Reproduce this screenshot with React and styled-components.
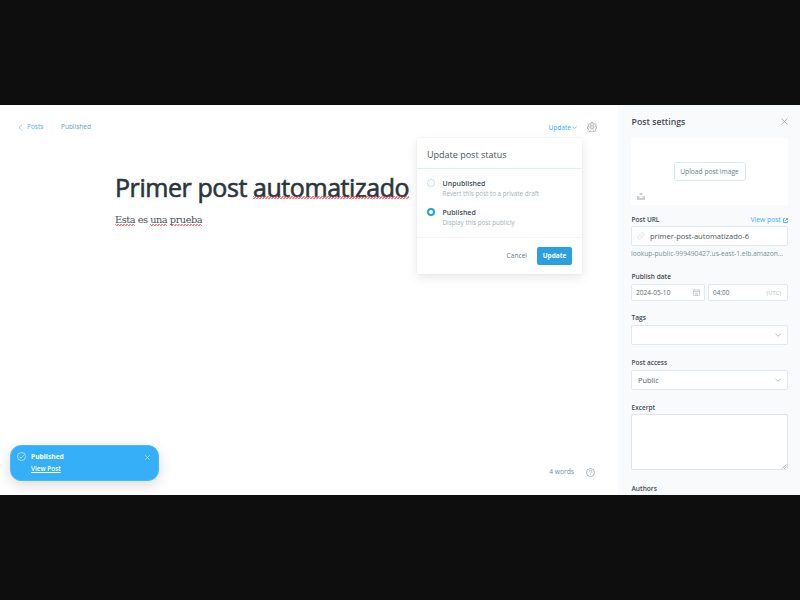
import React from "react";
import styled, { createGlobalStyle, css } from "styled-components";

const GlobalStyle = createGlobalStyle`
  * { box-sizing: border-box; }
  body { margin: 0; background: #0e0e0e; font-family: "Open Sans", "Noto Sans", sans-serif; color: #394047; }
`;

const Screen = styled.div`
  width: 800px;
  height: 600px;
  padding: 105px 0;
  background: #0e0e0e;
  overflow: hidden;
`;

const Stage = styled.div`
  display: flex;
  height: 390px;
  overflow: hidden;
  background: #fff;
`;

const Label = styled.span`
  display: block;
  white-space: nowrap;
  font-size: ${(p) => p.$size || 7}px;
  font-weight: ${(p) => p.$weight || 400};
  color: ${(p) => p.$color || "#434b52"};
  line-height: ${(p) => p.$line || 10}px;
`;

const Main = styled.main`
  position: relative;
  display: flex;
  flex-direction: column;
  width: 618px;
  height: 390px;
`;

const TopBar = styled.header`
  display: flex;
  align-items: center;
  justify-content: space-between;
  height: 20px;
  margin-top: 12px;
  padding: 0 21px 0 18px;
`;

const Crumbs = styled.nav`
  display: flex;
  align-items: center;
`;

const BackLink = styled.a`
  display: flex;
  align-items: center;
  gap: 4px;
  width: 34px;
  height: 19px;
  border-right: 1px solid #f8fafb;
  margin-right: 9px;
`;

const Actions = styled.div`
  display: flex;
  align-items: center;
  gap: 10px;
`;

const UpdateLink = styled.a`
  display: flex;
  align-items: center;
  gap: 1px;
  padding-top: 1px;
`;

const Canvas = styled.article`
  padding: 34px 0 0 115px;
`;

const Title = styled.h1`
  margin: 0;
  height: 32px;
  font-size: 25px;
  line-height: 32px;
  font-weight: 400;
  letter-spacing: -0.43px;
  -webkit-text-stroke: 0.6px #2b363c;
  white-space: nowrap;
  color: #2b363c;
`;

const Body = styled.p`
  margin: 9px 0 0;
  font-family: "DejaVu Serif", serif;
  font-size: 9.8px;
  letter-spacing: -0.48px;
  line-height: 16px;
  color: #4a555b;
`;

const Misspelled = styled.span`
  position: relative;
  display: inline-block;
  line-height: inherit;
  &::after {
    content: "";
    position: absolute;
    left: 0;
    right: 0;
    top: ${(p) => p.$top}px;
    height: ${(p) => p.$depth || 2}px;
    background:
      repeating-linear-gradient(135deg, rgba(244, 50, 60, 0.62) 0 1px, transparent 1px 2.12px);
  }
`;

const WordCount = styled.footer`
  display: flex;
  align-items: center;
  justify-content: flex-end;
  gap: 12px;
  height: 12px;
  margin: auto 23px 17px 0;
`;

const Popup = styled.section`
  position: absolute;
  left: 417px;
  top: 33px;
  width: 165px;
  height: 136px;
  border-radius: 2px;
  background: #fff;
  box-shadow: 0 0 2px rgba(0, 0, 0, 0.08), 0 4px 12px rgba(0, 0, 0, 0.09);
`;

const PopupHead = styled.div`
  display: flex;
  align-items: center;
  height: 31px;
  padding: 4px 10px 0;
  border-bottom: 1px solid #dfeef4;
`;

const PopupBody = styled.div`
  display: flex;
  flex-direction: column;
  gap: 9px;
  height: 69px;
  padding: 10px 10px 0;
  border-bottom: 1px solid #f3f5f6;
`;

const Option = styled.div`
  display: flex;
  gap: 7.5px;
  height: 20px;
`;

const Radio = styled.i`
  width: 8px;
  height: 8px;
  border-radius: 50%;
  background: #fff;
  border: 1px solid #c9e0ec;
  ${(p) =>
    p.$on &&
    css`
      border: 2.4px solid #2a9fe2;
    `}
`;

const PopupFoot = styled.div`
  display: flex;
  align-items: center;
  justify-content: flex-end;
  gap: 10px;
  height: 35px;
  padding-right: 10px;
`;

const PrimaryButton = styled.button`
  width: 35px;
  height: 18px;
  padding: 0;
  border: 0;
  border-radius: 2px;
  background: #2b9fe0;
  font-family: inherit;
  text-align: center;
`;

const Toast = styled.aside`
  position: absolute;
  left: 10px;
  top: 340px;
  display: flex;
  width: 149px;
  height: 36px;
  padding: 6px 8px 0 6px;
  border-radius: 11px;
  border: 1px solid #48bafa;
  background: #35b0f8;
  box-shadow: 0 4px 14px rgba(0, 0, 0, 0.15);
`;

const ToastText = styled.div`
  flex: 1;
  margin: 0 0 0 5px;
`;

const ToastClose = styled.div`
  padding-top: 2px;
  line-height: 0;
`;

const ToastLink = styled(Label)`
  margin-top: 2px;
  text-decoration: underline;
  text-underline-offset: 1px;
  text-decoration-thickness: 1px;
`;

const Sidebar = styled.aside`
  width: 182px;
  height: 390px;
  padding: 0 12px 0 13px;
  background: #f8fafc;
`;

const SideHead = styled.div`
  display: flex;
  align-items: center;
  justify-content: space-between;
  height: 33px;
  padding-left: 0.6px;
`;

const Uploader = styled.div`
  position: relative;
  display: flex;
  align-items: center;
  justify-content: center;
  height: 67px;
  border-radius: 1px;
  background: #fff;
`;

const UploadButton = styled.button`
  width: 72px;
  height: 19px;
  padding: 1px 0 0;
  border: 1px solid #dbe8ec;
  border-radius: 3px;
  background: #fff;
  font-family: inherit;
`;

const Unsplash = styled.svg`
  position: absolute;
  left: 6px;
  bottom: 5px;
`;

const Field = styled.div`
  margin-top: ${(p) => p.$gap}px;
`;

const FieldHead = styled.div`
  display: flex;
  align-items: center;
  justify-content: space-between;
  height: 10px;
  margin-bottom: ${(p) => p.$below || 1}px;
  padding-left: 0.5px;
`;

const ViewLink = styled.a`
  display: flex;
  align-items: center;
  gap: 2px;
`;

const Input = styled.div`
  display: flex;
  align-items: center;
  justify-content: space-between;
  width: ${(p) => (p.$width ? p.$width + "px" : "auto")};
  height: ${(p) => p.$height || 20}px;
  padding: 0 ${(p) => p.$right || 6}px 0 ${(p) => p.$left || 6}px;
  border: 1px solid #dfe9ef;
  border-radius: 2px;
  background: #fff;
`;

const UrlValue = styled.div`
  display: flex;
  align-items: center;
  gap: 5px;
`;

const DateRow = styled.div`
  display: flex;
  gap: 3px;
`;

const TextArea = styled.div`
  display: flex;
  align-items: flex-end;
  justify-content: flex-end;
  height: 56px;
  border: 1px solid #dde6ea;
  border-radius: 2px;
  background: #fff;
`;

const Chevron = ({ color, size = 6 }) => (
  <svg width={size} height={size} viewBox="0 0 6 6" fill="none" stroke={color} strokeWidth="0.7">
    <path d="M0.5 1.7 3 4.3 5.5 1.7" />
  </svg>
);

const Cross = ({ color, size, width = 0.8 }) => (
  <svg width={size} height={size} viewBox="0 0 7 7" fill="none" stroke={color} strokeWidth={width}>
    <path d="M0.5 0.5 6.5 6.5M6.5 0.5 0.5 6.5" />
  </svg>
);

const gearOutline =
  "M10.200 1.500h3.600l.8 3 2 .9 2.800-1.500 2.500 2.700-1.500 2.700.8 2 2.500.7v3l-2.700.8-.8 2 1.400 2.600-2.500 2.500-2.600-1.400-2 .8-.8 2.700h-3.400l-.8-2.700-2-.8-2.600 1.400-2.500-2.500 1.400-2.600-.8-2-2.700-.8v-3l2.700-.8.8-2-1.400-2.600 2.500-2.500 2.600 1.400 2-.9z";

const Gear = () => (
  <svg width="10" height="10" viewBox="0 0 24 24" fill="none" stroke="#7b8b93" strokeWidth="1.5">
    <circle cx="12" cy="12" r="4.600" />
    <circle cx="12" cy="12" r="1" strokeWidth="0.8" />
    <path d={gearOutline} />
  </svg>
);

export default function App() {
  return (
    <>
      <GlobalStyle />
      <Screen>
        <Stage>
          <Main>
            <TopBar>
              <Crumbs>
                <BackLink>
                  <svg width="5" height="7" viewBox="0 0 5 7" fill="none" stroke="#72bfe9" strokeWidth="0.7">
                    <path d="M4 .7 1 3.500l3 2.800" />
                  </svg>
                  <Label $color="#58b3e6" $size={6.5}>Posts</Label>
                </BackLink>
                <Label $color="#5d9fb5" $size={6.5}>Published</Label>
              </Crumbs>
              <Actions>
                <UpdateLink>
                  <Label $color="#35aaf0" $size={6.6}>Update</Label>
                  <Chevron color="#5c9fc2" size={5} />
                </UpdateLink>
                <Gear />
              </Actions>
            </TopBar>
            <Canvas>
              <Title>
                Primer post <Misspelled $top={25} $depth={3}>automatizado</Misspelled>
              </Title>
              <Body>
                <Misspelled $top={12}>Esta</Misspelled> es <Misspelled $top={12}>una</Misspelled>{" "}
                <Misspelled $top={12}>prueba</Misspelled>
              </Body>
            </Canvas>
            <WordCount>
              <Label $color="#70909e" $size={6.7}>4 words</Label>
              <svg width="9" height="9" viewBox="0 0 9 9" fill="none" stroke="#8a9ca6" strokeWidth="0.7">
                <circle cx="4.500" cy="4.500" r="4" />
                <path d="M3.200 3.600c0-1.800 2.700-1.700 2.600-.1 0 .9-1.300.9-1.300 1.900M4.500 6.200v.8" />
              </svg>
            </WordCount>

            <Popup>
              <PopupHead>
                <Label $size={9} $color="#4a555b" $line={14}>Update post status</Label>
              </PopupHead>
              <PopupBody>
                <Option>
                  <Radio />
                  <div>
                    <Label $weight={600}>Unpublished</Label>
                    <Label $size={6.3} $color="#a3b2ba">Revert this post to a private draft</Label>
                  </div>
                </Option>
                <Option>
                  <Radio $on />
                  <div>
                    <Label $weight={600}>Published</Label>
                    <Label $size={6.3} $color="#a3b2ba">Display this post publicly</Label>
                  </div>
                </Option>
              </PopupBody>
              <PopupFoot>
                <Label $size={6.6} $color="#687982">Cancel</Label>
                <PrimaryButton>
                  <Label $size={6.5} $weight={700} $color="#fff">Update</Label>
                </PrimaryButton>
              </PopupFoot>
            </Popup>

            <Toast>
              <svg width="9" height="9" viewBox="0 0 9 9" fill="none" stroke="#d8f0ff" strokeWidth="0.7">
                <circle cx="4.500" cy="4.500" r="4" />
                <path d="M2.500 4.700 4 6.200 6.900 3" />
              </svg>
              <ToastText>
                <Label $weight={700} $color="#fff" $size={6.7}>Published</Label>
                <ToastLink $weight={600} $color="#fff" $size={6.4}>View Post</ToastLink>
              </ToastText>
              <ToastClose>
                <Cross color="#d8f0ff" size={5} width={1} />
              </ToastClose>
            </Toast>
          </Main>

          <Sidebar>
            <SideHead>
              <Label $size={8.7} $weight={600} $line={14}>Post settings</Label>
              <Cross color="#8b989f" size={7} width={0.6} />
            </SideHead>
            <Uploader>
              <UploadButton>
                <Label $size={6.7} $color="#68808a">Upload post image</Label>
              </UploadButton>
              <Unsplash width="8" height="7" viewBox="0 0 8 7" fill="#ccd0d2">
                <path d="M2.500 0h3v2h-3zM0 3h2.500v2h3V3H8v4H0z" />
              </Unsplash>
            </Uploader>
            <Field $gap={10}>
              <FieldHead>
                <Label $size={6.5} $weight={600}>Post URL</Label>
                <ViewLink>
                  <Label $size={6.8} $color="#42b0ef">View post</Label>
                  <svg width="5" height="5" viewBox="0 0 5 5" fill="none" stroke="#42b0ef" strokeWidth="0.9">
                    <path d="M2 .5H.5v4h4V3M2 3 4.500.5M3 .5h1.500V2" />
                  </svg>
                </ViewLink>
              </FieldHead>
              <Input $left={5}>
                <UrlValue>
                  <svg width="8" height="8" viewBox="0 0 24 24" fill="none" stroke="#ccd6da" strokeWidth="2">
                    <path d="M10 13a5 5 0 0 0 7.500.5l3-3a5 5 0 0 0-7-7l-1.700 1.700M14 11a5 5 0 0 0-7.500-.5l-3 3a5 5 0 0 0 7 7l1.700-1.700" />
                  </svg>
                  <Label $size={7.5} $color="#4b5559">primer-post-automatizado-6</Label>
                </UrlValue>
              </Input>
              <Field $gap={3}>
                <Label $size={6.68} $color="#7b909a">lookup-public-999490427.us-east-1.elb.amazon...</Label>
              </Field>
            </Field>
            <Field $gap={13}>
              <FieldHead $below={2}>
                <Label $size={6.6} $weight={600}>Publish date</Label>
              </FieldHead>
              <DateRow>
                <Input $width={74} $height={17} $left={4} $right={4}>
                  <Label $size={6.6} $color="#5b676d">2024-05-10</Label>
                  <svg width="7" height="7" viewBox="0 0 7 7" fill="none" stroke="#c3cace" strokeWidth="0.8">
                    <path d="M.5 1h6v5.500h-6zM.5 2.500h6M2 0v1M5 0v1M2 4h3M2 5.300h3" />
                  </svg>
                </Input>
                <Input $width={80} $height={17} $left={4} $right={6}>
                  <Label $size={6.4} $color="#5b676d">04:00</Label>
                  <Label $size={5.8} $color="#b5c2c8">(UTC)</Label>
                </Input>
              </DateRow>
            </Field>
            <Field $gap={12}>
              <FieldHead $below={2}>
                <Label $size={6.6} $weight={600}>Tags</Label>
              </FieldHead>
              <Input>
                <span />
                <Chevron color="#8fa7b2" />
              </Input>
            </Field>
            <Field $gap={13}>
              <FieldHead $below={2}>
                <Label $size={6.5} $weight={600}>Post access</Label>
              </FieldHead>
              <Input>
                <Label $size={7.4} $color="#5b676d">Public</Label>
                <Chevron color="#8fa7b2" />
              </Input>
            </Field>
            <Field $gap={13}>
              <FieldHead>
                <Label $size={6.5} $weight={600}>Excerpt</Label>
              </FieldHead>
              <TextArea>
                <svg width="6" height="5" viewBox="0 0 6 5" fill="none" stroke="#9fa7ab" strokeWidth="0.8">
                  <path d="M0.500 5 5.500 0.500M3 5 5.500 2.800" />
                </svg>
              </TextArea>
            </Field>
            <Field $gap={14}>
              <FieldHead>
                <Label $size={6.6} $weight={600}>Authors</Label>
              </FieldHead>
            </Field>
          </Sidebar>
        </Stage>
      </Screen>
    </>
  );
}
